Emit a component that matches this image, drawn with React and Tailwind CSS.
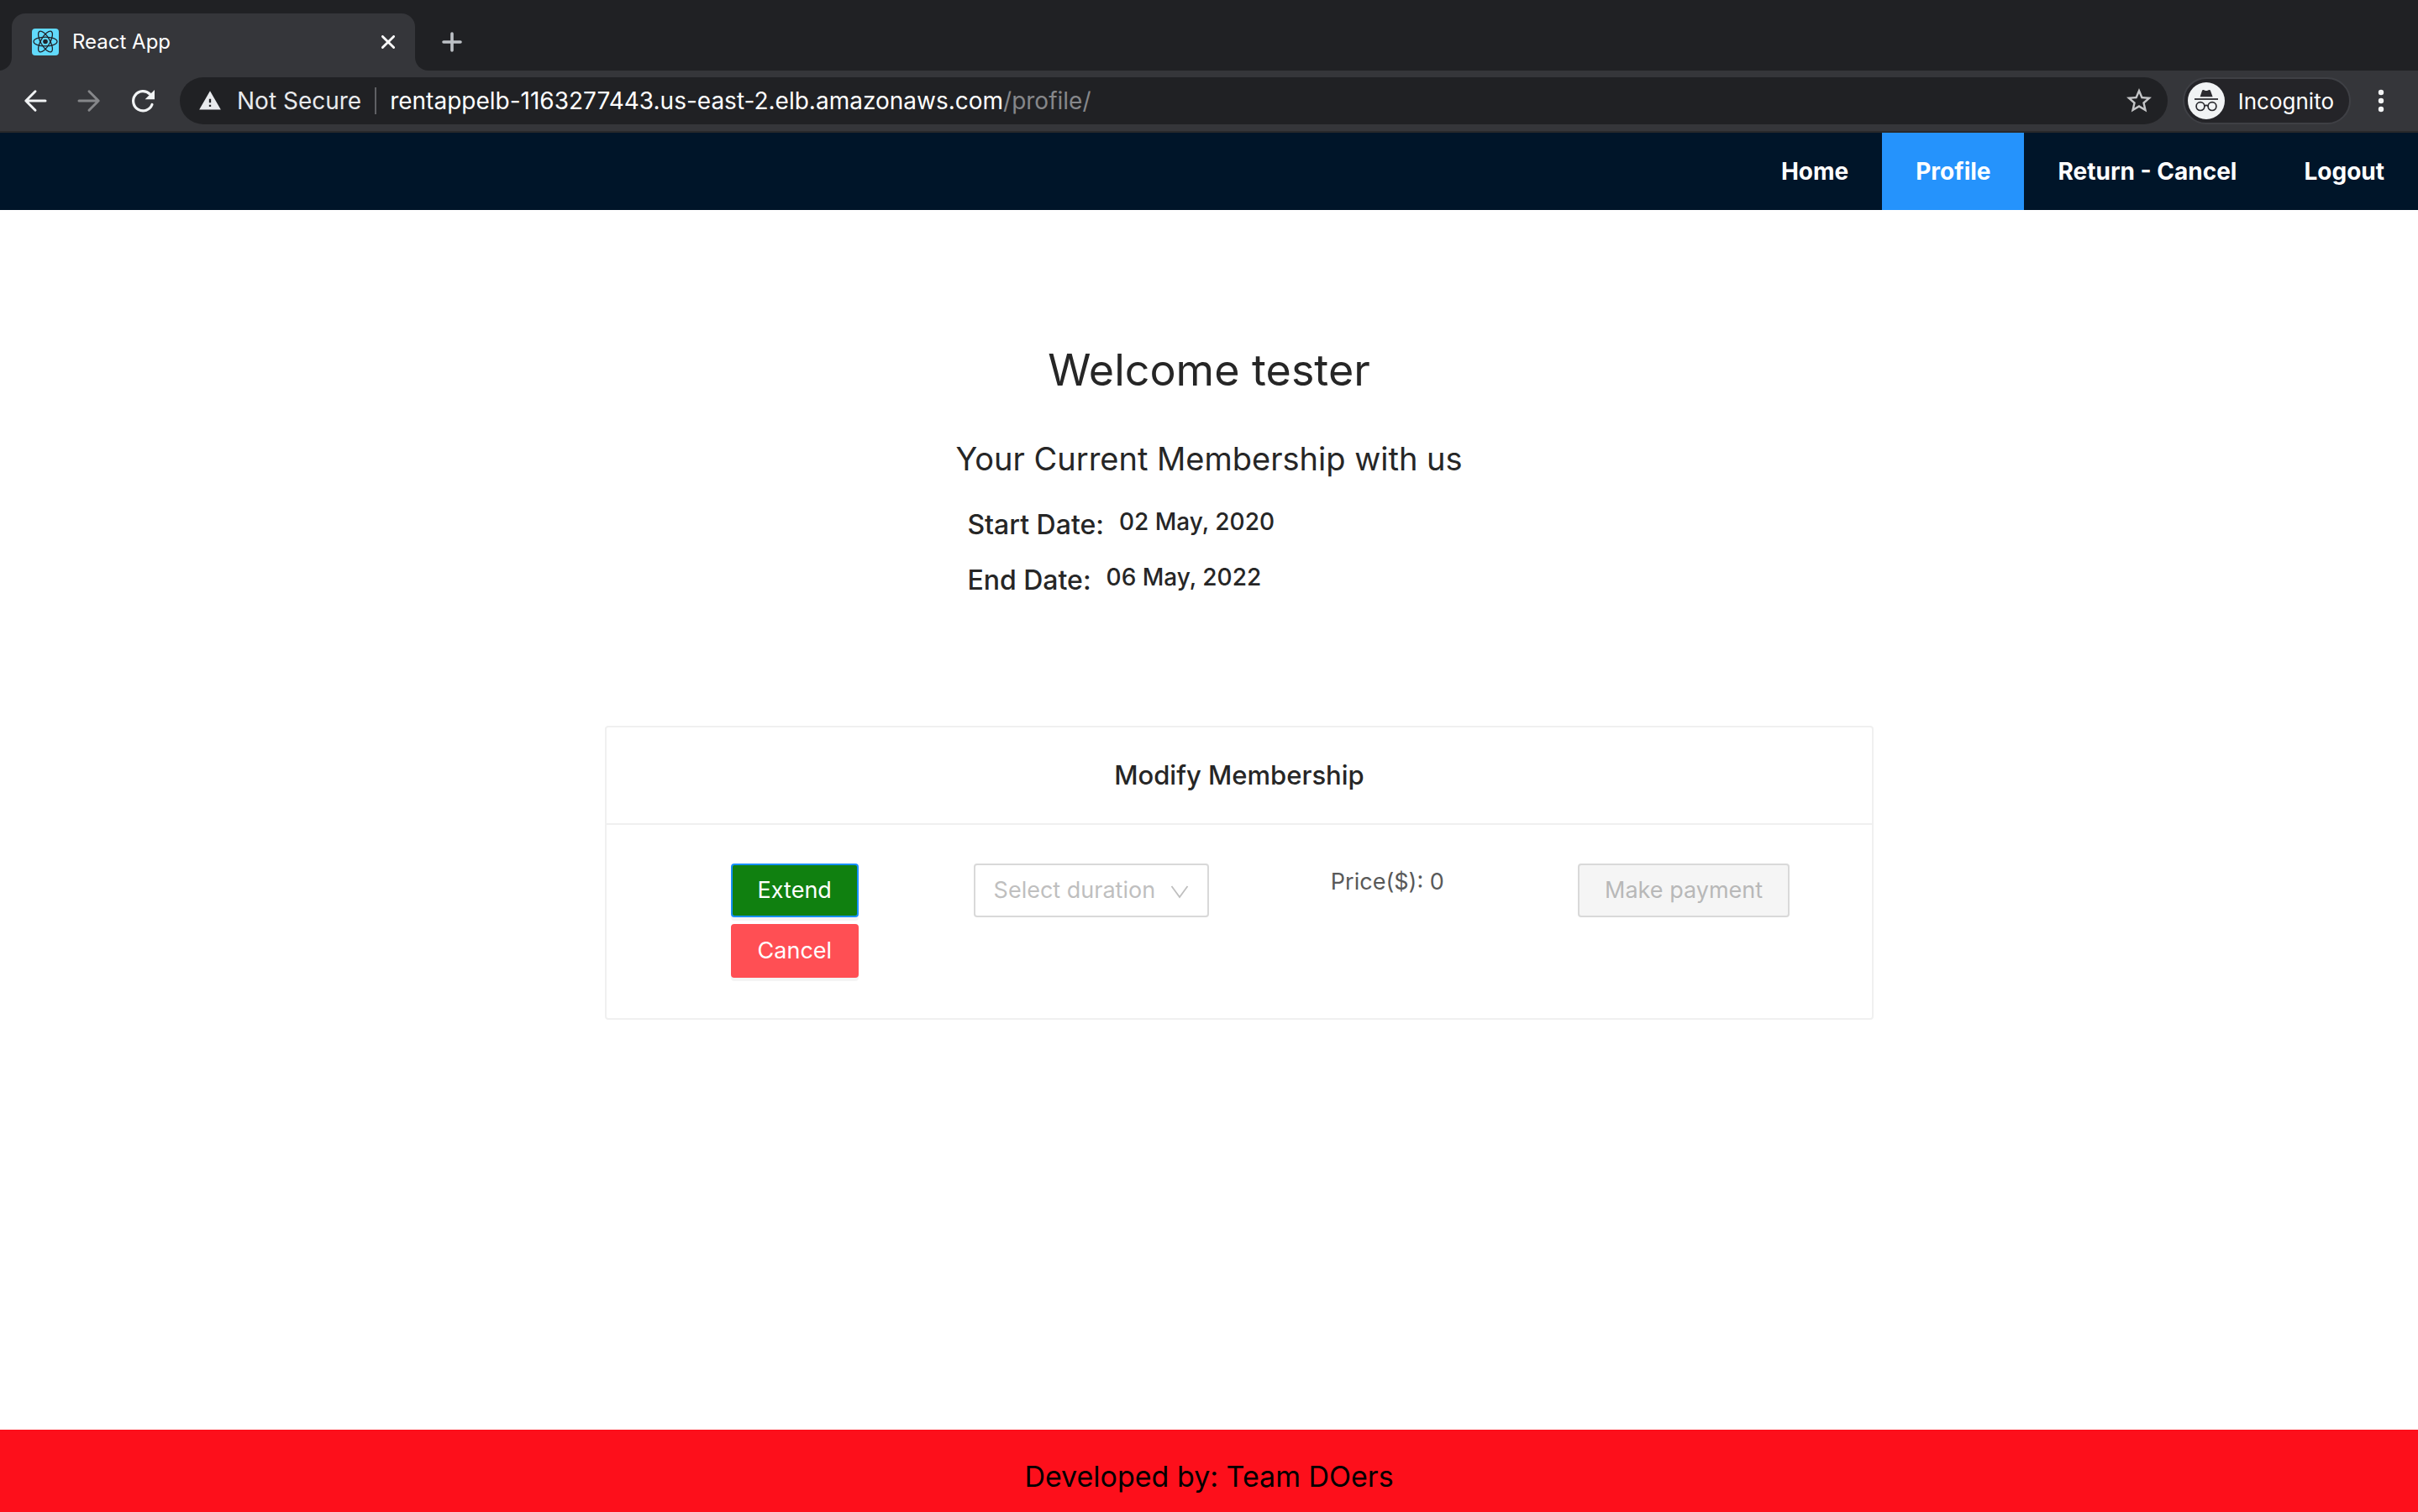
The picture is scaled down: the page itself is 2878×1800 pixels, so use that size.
const navItems = [
  { label: "Home", active: false },
  { label: "Profile", active: true },
  { label: "Return - Cancel", active: false },
  { label: "Logout", active: false },
];

function ReactFavicon() {
  return (
    <svg viewBox="0 0 32 32" className="size-8 shrink-0" aria-hidden="true">
      <rect width="32" height="32" rx="4" fill="#61dafb" />
      <g fill="none" stroke="#20232a" strokeWidth="1.3" transform="translate(16 15.5)">
        <ellipse rx="14" ry="5.4" />
        <ellipse rx="14" ry="5.4" transform="rotate(60)" />
        <ellipse rx="14" ry="5.4" transform="rotate(120)" />
      </g>
      <circle cx="16" cy="15.5" r="2.8" fill="#20232a" />
    </svg>
  );
}

function BackIcon({ className }) {
  return (
    <svg viewBox="0 0 32 32" className={className} fill="none" stroke="currentColor" strokeWidth="3" strokeLinecap="round" strokeLinejoin="round" aria-hidden="true">
      <path d="M28 16H5M16 4.8L4.8 16L16 27.2" />
    </svg>
  );
}

function ReloadIcon() {
  return (
    <svg viewBox="0 0 32 32" className="size-8" aria-hidden="true">
      <path d="M27 20.5A11.6 11.6 0 1 1 24.4 8" fill="none" stroke="currentColor" strokeWidth="3.2" strokeLinecap="round" />
      <path d="M30 3V14.2H18.6Z" fill="currentColor" />
    </svg>
  );
}

function IncognitoIcon() {
  return (
    <svg viewBox="0 0 44 44" className="size-11 shrink-0" aria-hidden="true">
      <circle cx="22" cy="22" r="22" fill="#f1f3f4" />
      <path d="M14.6 17.2L17 10C17.3 9 18 8.8 18.8 9.1L21 9.9C21.6 10.1 22.4 10.1 23 9.9L25.2 9.1C26 8.8 26.7 9 27 10L29.6 17.2Z" fill="#2b2b30" />
      <path d="M8 20H36" stroke="#2b2b30" strokeWidth="1.8" />
      <g fill="none" stroke="#2b2b30" strokeWidth="1.7">
        <circle cx="15" cy="28.6" r="4.9" />
        <circle cx="29" cy="28.6" r="4.9" />
        <path d="M19.9 28.2Q22 26.6 24.1 28.2" />
      </g>
    </svg>
  );
}

function TabStrip() {
  return (
    <div className="flex h-[84px] items-end bg-[#202124]">
      <svg viewBox="0 0 14 16" className="h-4 w-3.5 shrink-0" aria-hidden="true">
        <path d="M14 0V16H0C8 15 14 9 14 0Z" fill="#35363a" />
      </svg>
      <div className="flex h-[68px] w-[480px] items-center rounded-t-2xl bg-[#35363a] pl-6 pr-6">
        <ReactFavicon />
        <span className="ml-4 flex-1 text-2xl text-white">React App</span>
        <button type="button" aria-label="Close tab" className="text-white">
          <svg viewBox="0 0 16 16" className="size-4" stroke="currentColor" strokeWidth="2.8" strokeLinecap="round" aria-hidden="true">
            <path d="M1.4 1.4L14.6 14.6M14.6 1.4L1.4 14.6" />
          </svg>
        </button>
      </div>
      <svg viewBox="0 0 16 16" className="size-4 shrink-0" aria-hidden="true">
        <path d="M0 0V16H16C7 16 0 9 0 0Z" fill="#35363a" />
      </svg>
      <button type="button" aria-label="New tab" className="ml-4 flex h-[68px] items-center text-[#bdc1c6]">
        <svg viewBox="0 0 24 24" className="size-6" stroke="currentColor" strokeWidth="3.6" strokeLinecap="round" aria-hidden="true">
          <path d="M12 2V22M2 12H22" />
        </svg>
      </button>
    </div>
  );
}

function Toolbar() {
  return (
    <div className="flex h-[74px] items-center border-b-2 border-[#28292b] bg-[#35363a] pl-[26px] pr-7">
      <div className="flex gap-8 text-[#f1f3f4]">
        <button type="button" aria-label="Back">
          <BackIcon className="size-8" />
        </button>
        <button type="button" aria-label="Forward" className="text-[#86878a]">
          <BackIcon className="size-8 rotate-180" />
        </button>
        <button type="button" aria-label="Reload">
          <ReloadIcon />
        </button>
      </div>
      <div className="ml-7 flex h-14 flex-1 items-center rounded-full bg-[#202124] pl-[22px] pr-4 text-[28px]">
        <svg viewBox="0 0 24 24" className="size-7 shrink-0 text-[#e8eaed]" fill="currentColor" aria-hidden="true">
          <path d="M1 21h22L12 2 1 21zm12-3h-2v-2h2v2zm0-4h-2v-4h2v4z" />
        </svg>
        <span className="ml-[18px] text-[#e8eaed]">Not Secure</span>
        <span className="mx-4 h-8 w-0.5 bg-[#5f6064]" />
        <div role="textbox" aria-label="Address" className="flex-1 text-[#86878a]">
          <span className="text-white">rentappelb-1163277443.us-east-2.elb.amazonaws.com</span>
          /profile/
        </div>
        <button type="button" aria-label="Bookmark this page" className="text-[#c4c5c7]">
          <svg viewBox="0 0 24 24" className="size-9" fill="currentColor" aria-hidden="true">
            <path d="M22 9.24l-7.19-.62L12 2 9.19 8.63 2 9.24l5.46 4.73L5.82 21 12 17.27 18.18 21l-1.63-7.03L22 9.24zM12 15.4l-3.76 2.27 1-4.28-3.32-2.88 4.38-.38L12 6.1l1.71 4.04 4.38.38-3.32 2.88 1 4.28L12 15.4z" />
          </svg>
        </button>
      </div>
      <div className="ml-[18px] flex h-14 items-center gap-4 rounded-full border-2 border-[#3f4045] bg-[#242428] pl-1 pr-[18px] text-[26px] text-white">
        <IncognitoIcon />
        Incognito
      </div>
      <button type="button" aria-label="Menu" className="ml-5 text-[#f1f3f4]">
        <svg viewBox="0 0 32 32" className="size-8" fill="currentColor" aria-hidden="true">
          <circle cx="16" cy="6" r="3.2" />
          <circle cx="16" cy="16" r="3.2" />
          <circle cx="16" cy="26" r="3.2" />
        </svg>
      </button>
    </div>
  );
}

function NavBar() {
  return (
    <nav className="flex h-[92px] justify-end bg-[#001529] text-[28px] font-bold text-white">
      {navItems.map((item) => (
        <a
          key={item.label}
          href="#"
          className={item.active ? "flex items-center bg-[#2593fc] px-10" : "flex items-center px-10"}
        >
          {item.label}
        </a>
      ))}
    </nav>
  );
}

function DateRow({ label, value }) {
  return (
    <div className="flex items-start gap-[18px]">
      <dt className="pt-1 text-[32px] leading-[50px] font-medium">{label}</dt>
      <dd className="text-[28px] leading-[50px] font-medium">{value}</dd>
    </div>
  );
}

function MembershipCard() {
  return (
    <section className="mt-[148px] ml-[25%] w-[52.5%] rounded-sm border-2 border-[#f0f0f0]">
      <h3 className="border-b-2 border-[#f0f0f0] py-8 text-center text-[31px] leading-[50px] font-medium">
        Modify Membership
      </h3>
      <div className="grid grid-cols-4 items-start justify-items-center p-12 pt-[46px] text-[27px]">
        <div className="flex flex-col items-start gap-2">
          <button type="button" className="h-16 rounded border-2 border-[#1890ff] bg-[#108010] px-[30px] text-white shadow-[0_4px_0_rgba(0,0,0,0.045)]">
            Extend
          </button>
          <button type="button" className="h-16 rounded border-2 border-[#ff4f54] bg-[#ff4f54] px-[30px] text-white shadow-[0_4px_0_rgba(0,0,0,0.045)]">
            Cancel
          </button>
        </div>
        <div className="relative">
          <select aria-label="Select duration" defaultValue="" className="h-16 w-[280px] appearance-none rounded border-2 border-[#d9d9d9] bg-white pl-[22px] text-[#bfbfbf]">
            <option value="">Select duration</option>
          </select>
          <svg viewBox="0 0 22 16" className="pointer-events-none absolute top-[26px] right-6 h-4 w-[22px]" fill="none" stroke="#bfbfbf" strokeWidth="1.8" aria-hidden="true">
            <path d="M1.5 1L11 14L20.5 1" />
          </svg>
        </div>
        <p className="leading-[44px] text-[#595959]">Price($): 0</p>
        <button type="button" disabled className="h-16 rounded border-2 border-[#d9d9d9] bg-[#f5f5f5] px-[30px] text-[#b8b8b8]">
          Make payment
        </button>
      </div>
    </section>
  );
}

export default function App() {
  return (
    <div className="flex min-h-screen flex-col bg-white font-['Inter',sans-serif] text-[#262626]">
      <header>
        <TabStrip />
        <Toolbar />
        <NavBar />
      </header>
      <main className="flex-1 pt-[156px]">
        <h1 className="text-center text-[52px] leading-[70px]">Welcome tester</h1>
        <div className="mx-auto mt-10 w-fit">
          <h2 className="text-[38px] leading-[60px]">Your Current Membership with us</h2>
          <dl className="mt-5 flex flex-col gap-3 pl-3.5">
            <DateRow label="Start Date:" value="02 May, 2020" />
            <DateRow label="End Date:" value="06 May, 2022" />
          </dl>
        </div>
        <MembershipCard />
      </main>
      <footer className="h-[98px] bg-[#fd0f1b] pt-[30px] text-center text-[34px] leading-[52px] text-black">
        Developed by: Team DOers
      </footer>
    </div>
  );
}
